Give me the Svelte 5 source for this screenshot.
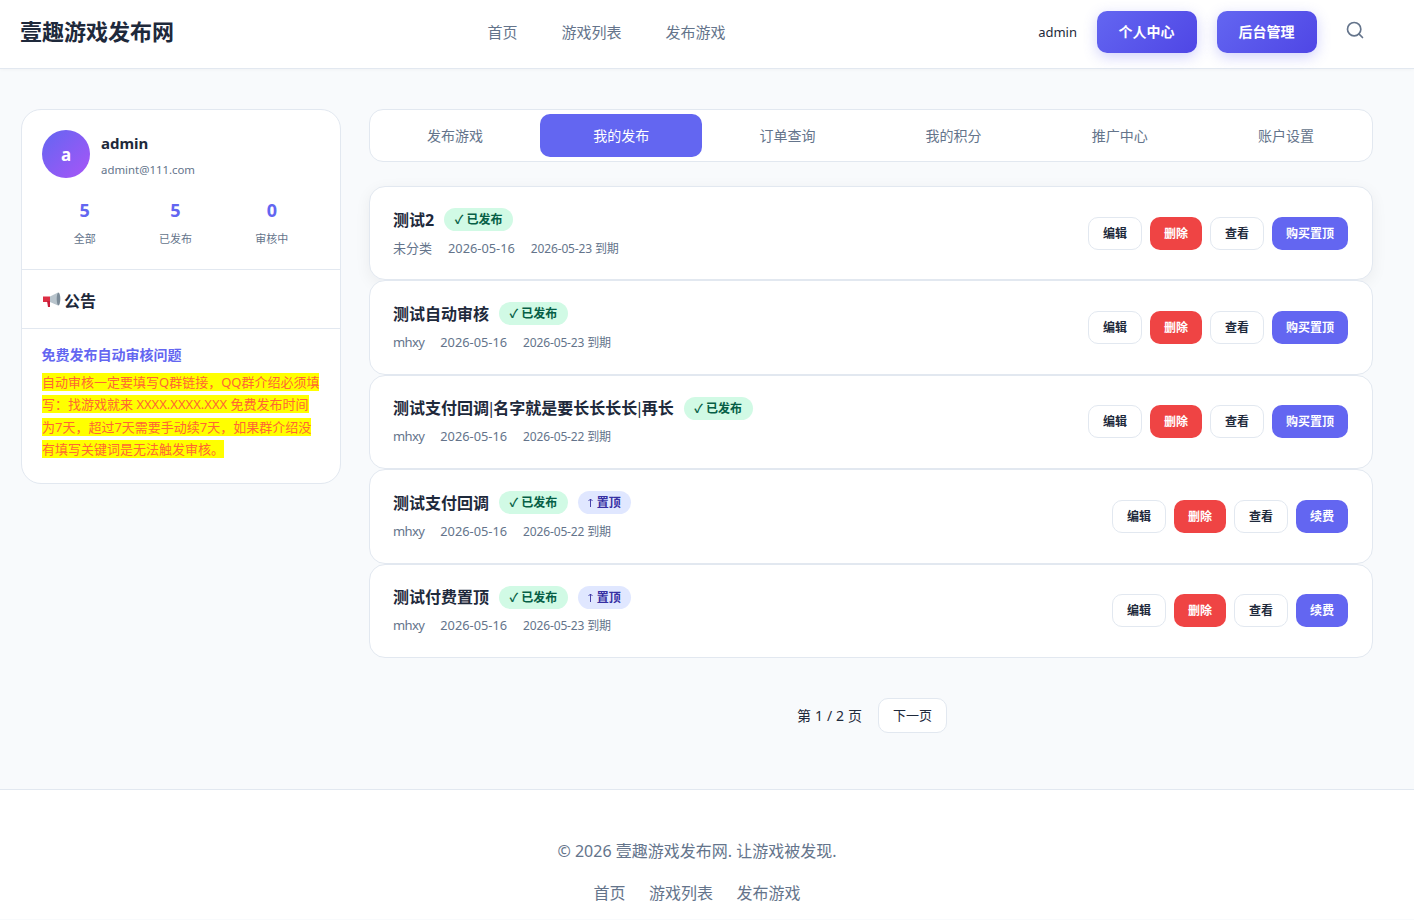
<script lang="ts">
	const navLinks = ['首页', '游戏列表', '发布游戏'];
	const tabs = ['发布游戏', '我的发布', '订单查询', '我的积分', '推广中心', '账户设置'];
	const stats = [
		{ value: 5, label: '全部' },
		{ value: 5, label: '已发布' },
		{ value: 0, label: '审核中' }
	];
	const games = [
		{ title: '测试2', category: '未分类', date: '2026-05-16', expires: '2026-05-23', pinned: false, hover: true },
		{ title: '测试自动审核', category: 'mhxy', date: '2026-05-16', expires: '2026-05-23', pinned: false },
		{ title: '测试支付回调|名字就是要长长长长|再长', category: 'mhxy', date: '2026-05-16', expires: '2026-05-22', pinned: false },
		{ title: '测试支付回调', category: 'mhxy', date: '2026-05-16', expires: '2026-05-22', pinned: true },
		{ title: '测试付费置顶', category: 'mhxy', date: '2026-05-16', expires: '2026-05-23', pinned: true }
	];
</script>

<header class="site-header">
	<a class="logo" href="/">壹趣游戏发布网</a>
	<nav class="main-nav">
		{#each navLinks as link}
			<a href="/">{link}</a>
		{/each}
	</nav>
	<div class="header-right">
		<span class="username">admin</span>
		<button class="btn-grad">个人中心</button>
		<button class="btn-grad">后台管理</button>
		<button class="search" aria-label="搜索">
			<svg width="20" height="20" viewBox="0 0 24 24" fill="none" stroke="#64748b" stroke-width="2" stroke-linecap="round" stroke-linejoin="round">
				<circle cx="11" cy="11" r="8" />
				<path d="m21 21-4.3-4.3" />
			</svg>
		</button>
	</div>
</header>

<main class="page">
	<aside class="sidebar">
		<section class="profile">
			<div class="user">
				<div class="avatar">a</div>
				<div>
					<div class="name">admin</div>
					<div class="email">admint@111.com</div>
				</div>
			</div>
			<div class="stats">
				{#each stats as stat}
					<div class="stat">
						<strong>{stat.value}</strong>
						<span>{stat.label}</span>
					</div>
				{/each}
			</div>
		</section>
		<section class="notice-head">
			<svg width="18" height="16" viewBox="0 0 18 16">
				<path d="M0 4.500h7v5.500H0z" fill="#dd2e44" />
				<path d="M4 9h3v6H5z" fill="#c81e3a" />
				<path d="M7 4.500l8-4v13l-8-3.500z" fill="#b8c4cc" />
				<ellipse cx="15.500" cy="7" rx="1.800" ry="6.500" fill="#7b8b98" />
			</svg>
			<h2>公告</h2>
		</section>
		<section class="notice-body">
			<h3>免费发布自动审核问题</h3>
			<p><span>自动审核一定要填写Q群链接，QQ群介绍必须填写：找游戏就来 XXXX.XXXX.XXX 免费发布时间为7天，超过7天需要手动续7天，如果群介绍没有填写关键词是无法触发审核。</span></p>
		</section>
	</aside>

	<div class="content">
		<div class="tabs">
			{#each tabs as tab, i}
				<button class="tab" class:active={i === 1}>{tab}</button>
			{/each}
		</div>

		<div class="list">
			{#each games as game}
				<article class="game" class:hover={game.hover}>
					<div class="info">
						<div class="title-row">
							<h3>
								{#each game.title.split('|') as part, i}
									{#if i > 0}<span class="pipe">|</span>{/if}{part}
								{/each}
							</h3>
							<span class="badge ok">✓ 已发布</span>
							{#if game.pinned}
								<span class="badge top">
									<svg width="5" height="9" viewBox="0 0 5 9" fill="none" stroke="currentColor" stroke-width="0.9">
										<path d="M2.500 9V1M.5 3l2-2 2 2" />
									</svg>
									置顶
								</span>
							{/if}
						</div>
						<div class="meta">
							<span class:latin={game.category === 'mhxy'}>{game.category}</span>
							<span class="date">{game.date}</span>
							<span class="expires">{game.expires} 到期</span>
						</div>
					</div>
					<div class="actions">
						<button class="act">编辑</button>
						<button class="act danger">删除</button>
						<button class="act">查看</button>
						<button class="act primary">{game.pinned ? '续费' : '购买置顶'}</button>
					</div>
				</article>
			{/each}
		</div>

		<div class="pager">
			<span>第 1 / 2 页</span>
			<button>下一页</button>
		</div>
	</div>
</main>

<footer class="site-footer">
	<p>© 2026 壹趣游戏发布网. 让游戏被发现.</p>
	<div class="footer-links">
		{#each navLinks as link}
			<a href="/">{link}</a>
		{/each}
	</div>
</footer>

<style>
	:global(body) {
		background: #f8fafc;
		color: #1e293b;
		font-family: "Noto Sans", "Noto Sans CJK SC", sans-serif;
	}

	a {
		color: inherit;
		text-decoration: none;
	}

	button {
		font-family: inherit;
		cursor: pointer;
	}

	.site-header {
		display: flex;
		align-items: center;
		justify-content: space-between;
		box-sizing: content-box;
		height: 64px;
		padding: 0 41px 4px 20px;
		background: #fff;
		border-bottom: 1px solid #e2e8f0;
		box-shadow: 0 1px 3px rgba(0, 0, 0, 0.03);
	}

	.logo {
		margin-top: -3px;
		font-size: 22px;
		font-weight: 700;
		line-height: 1;
	}

	.main-nav {
		display: flex;
		gap: 44px;
		margin-top: -1px;
		margin-left: 1px;
		font-size: 15px;
		color: #64748b;
	}

	.header-right {
		display: flex;
		align-items: center;
		gap: 20px;
	}

	.username {
		font-size: 13px;
	}

	.btn-grad {
		width: 100px;
		height: 42px;
		padding: 0 1px 2px 0;
		border: 0;
		border-radius: 10px;
		background: linear-gradient(135deg, #6366f1, #4f46e5);
		box-shadow: 0 4px 14px rgba(99, 102, 241, 0.3);
		color: #fff;
		font-size: 14px;
		font-weight: 700;
	}

	.search {
		display: flex;
		align-items: center;
		justify-content: center;
		width: 36px;
		height: 36px;
		margin-top: -4px;
		padding: 0;
		border: 0;
		background: none;
	}

	.page {
		display: flex;
		align-items: flex-start;
		gap: 28px;
		padding: 40px 41px 56px 21px;
	}

	.sidebar {
		flex: 0 0 320px;
		box-sizing: border-box;
		border: 1px solid #e2e8f0;
		border-radius: 20px;
		background: #fff;
	}

	.profile {
		padding: 20px 20px 21px;
		border-bottom: 1px solid #e2e8f0;
	}

	.user {
		display: flex;
		align-items: center;
		gap: 11px;
	}

	.avatar {
		display: flex;
		align-items: center;
		justify-content: center;
		width: 48px;
		height: 48px;
		border-radius: 50%;
		background: linear-gradient(135deg, #6366f1, #a855f7);
		color: #fff;
		font-size: 17px;
		font-weight: 700;
	}

	.name {
		margin-top: 1px;
		font-size: 15px;
		font-weight: 700;
		line-height: 24px;
	}

	.email {
		margin-top: 7px;
		font-size: 11.4px;
		line-height: 16px;
		color: #64748b;
	}

	.stats {
		display: flex;
		justify-content: space-around;
		margin-top: 16px;
		text-align: center;
	}

	.stat strong {
		display: block;
		font-size: 18px;
		line-height: 32px;
		color: #6366f1;
	}

	.stat span {
		display: block;
		margin-top: 4px;
		font-size: 11px;
		line-height: 18px;
		color: #64748b;
	}

	.notice-head {
		display: flex;
		align-items: center;
		gap: 3px;
		height: 56px;
		padding: 2px 20px 0 21px;
		border-bottom: 1px solid #e2e8f0;
	}

	.notice-head h2 {
		margin: 0;
		font-size: 16px;
		font-weight: 600;
	}

	.notice-body {
		padding: 15px 20px 22.5px 19.5px;
	}

	.notice-body h3 {
		margin: 0;
		font-size: 14px;
		font-weight: 700;
		line-height: 22px;
		color: #6366f1;
	}

	.notice-body p {
		margin: 4.5px 0 0;
		padding-left: 0.5px;
		font-size: 13px;
		line-height: 22.5px;
		color: #ff6633;
	}

	.notice-body p span {
		background: #ffff00;
	}

	.content {
		flex: 1;
		min-width: 0;
	}

	.tabs {
		display: flex;
		gap: 4px;
		padding: 4px 5px 4px 4px;
		border: 1px solid #e2e8f0;
		border-radius: 14px;
		background: #fff;
	}

	.tab {
		flex: 1;
		height: 43px;
		padding: 0 0 2px;
		border: 0;
		border-radius: 10px;
		background: none;
		color: #64748b;
		font-size: 14px;
	}

	.tab.active {
		background: #6366f1;
		color: #fff;
	}

	.list {
		margin-top: 24px;
	}

	.game {
		display: flex;
		align-items: center;
		justify-content: space-between;
		box-sizing: border-box;
		height: 94.400px;
		padding: 0 24px 0 23px;
		border: 1px solid #e2e8f0;
		border-radius: 16px;
		background: #fff;
	}

	.game.hover {
		box-shadow: 0 4px 16px rgba(15, 23, 42, 0.06);
	}

	.title-row {
		display: flex;
		align-items: center;
		gap: 10px;
	}

	.title-row h3 {
		margin: 0;
		font-size: 16px;
		font-weight: 700;
		line-height: 24px;
	}

	.pipe {
		margin: 0 -2.25px;
		font-weight: 400;
	}

	.badge {
		margin-top: -0.5px;
		padding: 0 10px;
		border-radius: 999px;
		font-size: 12px;
		font-weight: 600;
		line-height: 23px;
	}

	.badge.ok {
		padding: 0 10.5px;
		background: #d1fae5;
		color: #065f46;
	}

	.badge.top {
		display: flex;
		align-items: center;
		gap: 4px;
		background: #e0e7ff;
		color: #3730a3;
	}

	.meta {
		display: flex;
		align-items: baseline;
		gap: 16px;
		margin-top: 6px;
		font-size: 13px;
		line-height: 20px;
		color: #64748b;
	}

	.meta .latin {
		letter-spacing: -0.6px;
	}

	.meta .date {
		font-size: 12.8px;
	}

	.meta .expires {
		font-size: 12px;
		letter-spacing: -0.15px;
	}

	.actions {
		display: flex;
		gap: 8px;
	}

	.act {
		height: 33px;
		padding: 0 14px 1px;
		border: 1px solid #e2e8f0;
		border-radius: 10px;
		background: #fff;
		color: #1e293b;
		font-size: 12px;
		font-weight: 600;
	}

	.act.danger {
		border: 0;
		background: #ef4444;
		color: #fff;
	}

	.act.primary {
		border: 0;
		background: #6366f1;
		color: #fff;
	}

	.pager {
		display: flex;
		align-items: center;
		justify-content: center;
		gap: 16px;
		margin-top: 40px;
		padding-left: 2px;
		font-size: 14px;
		word-spacing: 0.3px;
	}

	.pager button {
		height: 35px;
		padding: 0 14px 1px;
		border: 1px solid #e2e8f0;
		border-radius: 10px;
		background: #fff;
		color: #1e293b;
		font-size: 13px;
	}

	.site-footer {
		padding: 49px 41px 14px 21px;
		border-top: 1px solid #e2e8f0;
		background: #fff;
		text-align: center;
		color: #64748b;
		font-size: 16px;
	}

	.site-footer p {
		margin: 0;
		line-height: 24px;
	}

	.footer-links {
		display: flex;
		justify-content: center;
		gap: 23.5px;
		margin-top: 18px;
		line-height: 24px;
	}
</style>
